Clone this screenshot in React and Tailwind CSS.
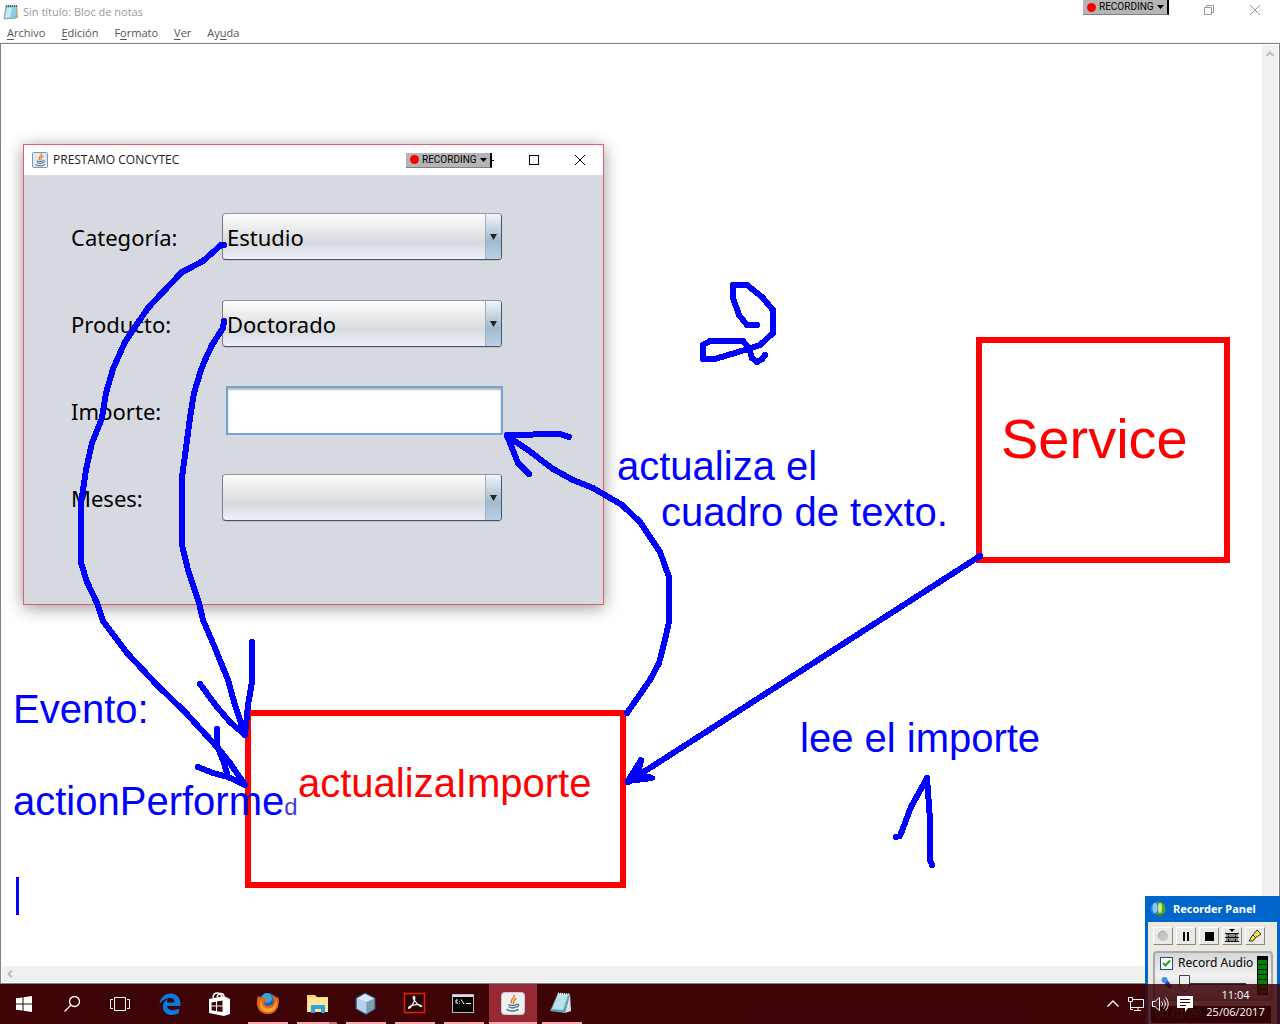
import React from "react";

const sans = "font-['Open_Sans',sans-serif]";

function NotepadIcon({ className }) {
  return (
    <svg className={className} viewBox="0 0 16 16" aria-hidden="true">
      <path d="M3 2 L14 2 L13 14 L1 15 Z" fill="#8fd0e0" stroke="#6f9aa5" strokeWidth="0.8" />
      <path d="M4 4 L9 4 L7 13 L2 14 Z" fill="#c4eaf3" />
      <path d="M14 2 L15.3 14.5 L13 14 Z" fill="#c8a96a" />
      <path d="M3 2 H14" stroke="#4b5d63" strokeWidth="2" strokeDasharray="1 1" />
    </svg>
  );
}

function JavaCup() {
  return (
    <g fill="none" strokeLinecap="round">
      <path d="M9.4 1.8 C10.5 4 5.6 4.8 7.4 7.6 M10.8 4.4 C8.4 5.4 9.8 6.6 8.8 8" stroke="#ee7a1c" strokeWidth="1.2" />
      <path d="M5 9 C6.5 9.8 9.5 9.8 11 9 M5.4 10.8 C7 11.6 9.3 11.6 10.6 10.8 M3.8 12.8 C6 14.2 10.5 14.2 12.4 12.8 M11.4 8.6 C13.6 8.4 13 10.6 11.2 10.8" stroke="#47708f" strokeWidth="1" />
    </g>
  );
}

function RecordingBadge() {
  return (
    <div className="flex h-[15px] w-[86px] items-center gap-[3px] border-r-2 border-b border-r-black border-b-[#808080] bg-[#b5b5b5] pl-1 font-[Roboto,sans-serif] text-[10px] leading-none text-black">
      <span className="size-[9px] shrink-0 rounded-full bg-[#fb0000]" />
      <span className="w-[55px]">RECORDING</span>
      <svg className="h-1 w-[7px] shrink-0" viewBox="0 0 7 4" aria-hidden="true"><path d="M0 0 H7 L3.5 4 Z" /></svg>
    </div>
  );
}

const menus = [["", "A", "rchivo"], ["", "E", "dición"], ["F", "o", "rmato"], ["", "V", "er"], ["Ay", "u", "da"]];

function Notepad() {
  return (
    <>
      <header className={`flex h-6 items-center justify-between bg-white ${sans}`}>
        <div className="flex items-center gap-1 pl-[3px] text-[11px] text-[#999]">
          <NotepadIcon className="size-4" />
          <h1>Sin título: Bloc de notas</h1>
        </div>
        <div className="flex h-full items-start">
          <RecordingBadge />
          <div className="flex pr-[18px] pl-[33px] pt-[3px]">
            <button aria-label="Restaurar" className="mr-8">
              <svg className="size-[14px]" viewBox="0 0 14 14" fill="none" stroke="#999"><path d="M2.5 4.5 H9.5 V11.5 H2.5 Z M4.5 4 V2.5 H11.5 V9.5 H10" /></svg>
            </button>
            <button aria-label="Cerrar">
              <svg className="size-[14px]" viewBox="0 0 14 14" fill="none" stroke="#999"><path d="M2 2 L12 12 M12 2 L2 12" /></svg>
            </button>
          </div>
        </div>
      </header>
      <nav className={`flex h-[19px] items-center gap-4 border-b border-[#f0f0f0] bg-white pl-[7px] text-[11px] text-[#555] ${sans}`}>
        {menus.map(([a, u, b]) => (
          <button key={b}>{a}<span className="underline underline-offset-2">{u}</span>{b}</button>
        ))}
      </nav>
      <section className="flex flex-1 flex-col border border-[#828282] bg-white p-px">
        <div className="flex flex-1">
          <div className="flex-1" />
          <div className="flex w-4 justify-center bg-[#f0f0f0] pt-[5px]">
            <svg className="h-2 w-2" viewBox="0 0 8 8" fill="none" stroke="#bdbdbd" strokeWidth="2"><path d="M0.5 6 L4 2.5 L7.5 6" /></svg>
          </div>
        </div>
        <div className="flex h-4 items-center bg-[#f0f0f0] pl-1">
          <svg className="size-2" viewBox="0 0 8 8" fill="none" stroke="#bdbdbd" strokeWidth="2"><path d="M6 0.5 L2.5 4 L6 7.5" /></svg>
        </div>
      </section>
    </>
  );
}

function Combo({ id, value }) {
  return (
    <div className="relative h-[47px] w-[280px] overflow-hidden rounded border border-t-[#9296a0] border-r-[#3d566d] border-b-[#4e525b] border-l-[#777b85] bg-linear-to-b from-[#fcfcfd] via-[#d7dadd] via-65% to-[#edf1fb] shadow-[0_1px_0_#bfc3cb]">
      <select id={id} defaultValue={value} className="h-full w-full appearance-none bg-transparent pt-[2px] pl-1 outline-none">
        <option>{value}</option>
      </select>
      <span className="pointer-events-none absolute inset-y-0 right-0 flex w-4 items-center justify-center border-l border-[#9db1c2] bg-linear-to-b from-[#f1f5f8] via-[#a4b9cb] via-60% to-[#bad0e8]">
        <svg className="h-[6px] w-[7px]" viewBox="0 0 7 6"><path d="M0 0 H7 L3.5 6 Z" fill="#1c2329" /></svg>
      </span>
    </div>
  );
}

const fields = [
  { id: "categoria", label: "Categoría:", value: "Estudio" },
  { id: "producto", label: "Producto:", value: "Doctorado" },
  { id: "importe", label: "Importe:", text: true },
  { id: "meses", label: "Meses:", value: "" },
];

function LoanWindow() {
  return (
    <section className="absolute top-[144px] left-[23px] w-[581px] border border-[#e85a68] bg-[#d6d9e0] shadow-[0_3px_16px_rgba(0,0,0,0.4)]">
      <header className={`flex h-[30px] items-center bg-white pl-2 text-[12px] text-[#222] ${sans}`}>
        <svg className="mr-[5px] size-4" viewBox="0 0 16 16" aria-hidden="true">
          <rect x="0.5" y="0.5" width="15" height="15" rx="1" fill="#dfe8ef" stroke="#7c98ac" />
          <JavaCup />
        </svg>
        <h2 className="flex-1">PRESTAMO CONCYTEC</h2>
        <RecordingBadge />
        <button aria-label="Minimizar" className="mr-[34px] h-px w-[2px] bg-black" />
        <button aria-label="Maximizar" className="mr-[34px]">
          <svg className="size-3" viewBox="0 0 12 12" fill="none" stroke="#000"><rect x="1.5" y="1.5" width="9" height="9" /></svg>
        </button>
        <button aria-label="Cerrar" className="mr-[17px]">
          <svg className="size-3" viewBox="0 0 12 12" fill="none" stroke="#000"><path d="M1 1 L11 11 M11 1 L1 11" /></svg>
        </button>
      </header>
      <form className="flex flex-col gap-10 pt-[38px] pb-[83px] pl-[47px] font-['Noto_Sans',sans-serif] text-[22px] text-black">
        {fields.map((f) => (
          <div key={f.id} className="flex h-[47px] items-center">
            <label htmlFor={f.id} className="w-[151px] pt-[2px]">{f.label}</label>
            {f.text ? (
              <input id={f.id} className="ml-1 h-[49px] w-[277px] border-2 border-[#76a3cf] bg-white px-1 shadow-[inset_0_2px_2px_#b8b8b8] outline-none" />
            ) : (
              <Combo id={f.id} value={f.value} />
            )}
          </div>
        ))}
      </form>
    </section>
  );
}

const strokes = [
  "224,245 221,245 203,261 190,268 182,272 162,293 148,308 135,327 125,342 113,369 106,393 102,418 92,443 86,470 81,503 81,563 87,582 97,603 103,621 127,653 143,670 157,685 185,712 217,747 230,763 245,785",
  "217,729 217,745 224,763 228,777 245,785",
  "198,767 213,773 228,777 245,785",
  "224,321 223,328 212,345 205,360 201,370 194,393 190,418 183,470 182,477 182,545 188,570 199,603 203,620 215,648 228,680 235,705 245,735",
  "252,642 252,682 248,705 245,735",
  "200,684 217,707 230,722 245,735",
  "569,437 560,434 507,435 512,448 518,463 529,474",
  "507,436 528,450 553,469 573,480 593,488 622,505 640,522 650,537 660,552 669,577 669,622 665,640 659,663 650,680 627,713",
  "980,556 628,782",
  "896,837 900,836 911,807 927,778 930,820 930,860 932,865",
  "757,325 747,325 739,315 733,298 733,285 747,285 762,297 773,310 773,333 760,345 748,349 715,359 703,359 703,345 710,341 743,341 749,348 752,358 757,362 762,359 765,355",
];

function Note({ className, children }) {
  return <p className={`absolute text-[40px] leading-none whitespace-nowrap ${className}`}>{children}</p>;
}

function Annotations() {
  return (
    <div className="pointer-events-none absolute inset-0 font-['Liberation_Sans',sans-serif] text-[#0000ff]">
      <div className="absolute top-[337px] left-[976px] h-[226px] w-[254px] border-[6px] border-[#ff0000]" />
      <div className="absolute top-[710px] left-[245px] h-[178px] w-[381px] border-[6px] border-[#ff0000]" />
      <svg className="absolute top-0 left-0 h-[1024px] w-[1280px]" viewBox="0 0 1280 1024" fill="none" stroke="#0000ff" strokeWidth="6" strokeLinecap="round" strokeLinejoin="round" shapeRendering="crispEdges">
        {strokes.map((points) => <polyline key={points} points={points} />)}
        <path d="M641 760 L628 781 L652 778 L638 774 Z" fill="#0000ff" />
      </svg>
      <p className="absolute top-[411px] left-[1001px] text-[56px] leading-none text-[#ff0000]">Service</p>
      <Note className="top-[763px] left-[298px] text-[#ff0000]">actualizaImporte</Note>
      <Note className="top-[446px] left-[617px]">actualiza el</Note>
      <Note className="top-[492px] left-[661px]">cuadro de texto.</Note>
      <Note className="top-[718px] left-[800px]">lee el importe</Note>
      <Note className="top-[689px] left-[13px]">Evento:</Note>
      <Note className="top-[781px] left-[13px]">actionPerforme<span className="text-[24px] text-[#4040c8]">d</span></Note>
      <div className="absolute top-[877px] left-[16px] h-[38px] w-[3px] bg-[#0000ff]" />
    </div>
  );
}

function PanelButton({ label, children }) {
  return (
    <button aria-label={label} className="flex h-[18px] w-5 items-center justify-center border border-t-white border-r-[#888] border-b-[#888] border-l-white bg-[#e9e9e5]">
      <svg className="size-[14px]" viewBox="0 0 14 14">{children}</svg>
    </button>
  );
}

function RecorderPanel() {
  return (
    <aside className="absolute right-0 bottom-0 h-32 w-[135px] border-x-[3px] border-[#0066cc] bg-[#ece9e1]">
      <header className="flex h-[26px] items-center gap-[7px] bg-[#0066cc] pl-[2px] font-['Noto_Sans',sans-serif] text-[11px] font-bold whitespace-nowrap text-white">
        <svg className="size-4 shrink-0" viewBox="0 0 16 16" aria-hidden="true">
          <circle cx="8" cy="8" r="7.5" fill="#2a7fd0" />
          <path d="M8 0.5 A7.5 7.5 0 0 1 8 15.5 Z" fill="#4fa524" />
          <ellipse cx="5" cy="7" rx="2.5" ry="5" fill="#88c6f4" />
          <ellipse cx="10" cy="7" rx="2" ry="5" fill="#c9ec7c" />
          <path d="M2 12 C5 14.5 11 14.5 14 12 A7.5 7.5 0 0 1 2 12 Z" fill="#1b5a55" />
        </svg>
        <h2>Recorder Panel</h2>
      </header>
      <div className="flex gap-[3px] pt-[5px] pl-[5px]">
        <PanelButton label="Grabar"><circle cx="7" cy="7" r="5" fill="#c4c4c4" /><path d="M2.5 9 A5 5 0 0 1 9 2.5" fill="none" stroke="#aaa" /></PanelButton>
        <PanelButton label="Pausa"><path d="M4 3 H6 V12 H4 Z M8 3 H10 V12 H8 Z" /></PanelButton>
        <PanelButton label="Detener"><path d="M3 3 H12 V12 H3 Z" /></PanelButton>
        <PanelButton label="Fotograma">
          <path d="M4 0 H10 L7 3 Z" />
          <path d="M1 5 H13 V12 H1 Z" fill="#888" />
          <path d="M0 4.5 H14 M0 8.5 H14 M0 12.5 H14" stroke="#111" />
          <path d="M3.5 4 V13 M10.5 4 V13" stroke="#111" strokeDasharray="2 1" />
        </PanelButton>
        <PanelButton label="Resaltar"><path d="M9 1 L13 5 L7 9 L5 12 L1 12 L4 7 Z" fill="#ffe23d" stroke="#333" /><path d="M5 6 L8 9" stroke="#333" /></PanelButton>
      </div>
      <div className="mt-[6px] ml-[5px] flex h-[50px] w-[120px] justify-between rounded-sm border-2 border-[#aaa] bg-linear-to-b from-[#d7d7d7] via-[#f2f2f2] to-[#c8c8c8] pt-[3px] pr-[3px] pl-[5px]">
        <div className="w-[90px]">
          <label className="flex h-[14px] items-center gap-[5px] font-['Noto_Sans',sans-serif] text-[12px] leading-none whitespace-nowrap text-black">
            <span className="relative size-[13px]">
              <input type="checkbox" defaultChecked className="block size-[13px] appearance-none border border-[#1c5180] bg-white" />
              <svg className="pointer-events-none absolute inset-0 size-[13px]" viewBox="0 0 13 13" fill="none" stroke="#21a121" strokeWidth="2"><path d="M3 6 L5.5 8.5 L10 3.5" /></svg>
            </span>
            Record Audio
          </label>
          <svg className="mt-[5px] h-[20px] w-[88px]" viewBox="0 0 88 20" aria-hidden="true">
            <path d="M4 4 L11 13" stroke="#164ca0" strokeWidth="4" /><circle cx="4.5" cy="5" r="3" fill="#458de8" />
            <path d="M20 9 H86" stroke="#333" strokeWidth="2" />
            <path d="M19.5 0.5 H29.5 V12 L24.5 17 L19.5 12 Z" fill="#eee" stroke="#444" />
          </svg>
        </div>
        <div className="h-[39px] w-[11px] shrink-0 bg-black p-px pt-1">
          <div className="h-full bg-[repeating-linear-gradient(#008300_0_4px,#000_4px_5px)]" />
        </div>
      </div>
      <div className="mt-[5px] ml-[3px] h-[17px] w-[120px] bg-black pl-1 font-['Liberation_Sans',sans-serif] text-[12px] leading-[17px] text-[#00a000]">00:01:20</div>
    </aside>
  );
}

const pinned = [
  { name: "Edge", icon: <path d="M1.5 12.5 C2.5 5.5 6.5 1.5 12.5 1.5 C19 1.5 23 6 22.5 14 H9 C9.5 18.5 16.5 19.5 21 16.5 V21 C13 25.5 4.5 22 4.8 14 C5.2 10.5 7.5 8 10 7 C9.2 8.5 9 9.3 9 10.4 H16.5 C16.5 7.5 15 6 12 6 C8 6 4 8.3 1.5 12.5 Z" fill="#0a7ade" /> },
  { name: "Tienda", icon: <><path d="M6 6 C6 0 13 -1 15 5 M10 5 C11 1 16 0 17 4" fill="none" stroke="#fff" strokeWidth="1.5" /><path d="M2 7 L17 4 V24 L2 21 Z M17 4 L23 7 V22 L17 24 Z" fill="#fff" /><path d="M4.5 10.5 L9 9.7 V13.5 H4.5 Z M10 9.5 L15.5 8.5 V13.5 H10 Z M4.5 14.5 H9 V19 L4.5 18.3 Z M10 14.5 H15.5 V20 L10 19.2 Z" fill="#3f0508" /></> },
  { name: "Firefox", open: true, icon: <><circle cx="12" cy="11" r="10" fill="#1668b3" /><circle cx="11" cy="6" r="5" fill="#3aa5d9" /><path d="M2 4 L6 6 C9 5 11 7 11 9 L8 10 C8 15 14 15 17 12 C19 9 17 6 15 4 C20 4 22 7 22.5 5 C24 13 21 22 12 22 C2 22 -1 13 2 4 Z" fill="#e8641b" /><path d="M6 7 C4 13 9 18 15 16 C19 15 20 11 20 8 C23 14 18 20 12 20 C4 20 2 12 6 7 Z" fill="#f7a928" /></> },
  { name: "Explorador", open: true, stacked: true, icon: <><path d="M2 3 H10 L12 5 H23 V20 H2 Z" fill="#f9d66c" /><path d="M3 6 H23 V20 H3 Z" fill="#ffe69a" /><path d="M6 13 H20 V21 H16 V17 H10 V21 H6 Z" fill="#2ba4e6" /></> },
  { name: "NetBeans", open: true, icon: <><path d="M11 1 L21 6 V17 L12 22.5 L2 17 V6 Z" fill="#94b8dd" stroke="#2c4770" strokeWidth="1.2" /><path d="M11 2 L20 6.5 L12 10 L3 6.5 Z" fill="#d8eaf8" /><path d="M3 7 L12 10.5 V21 L3 16.5 Z" fill="#b9d3ed" /><path d="M12.5 10.5 L20 7 V16.5 L12.5 21 Z" fill="#7f9fae" /></> },
  { name: "Acrobat", open: true, icon: <><rect x="1.5" y="1.5" width="20" height="19" fill="#250707" stroke="#e31c0c" strokeWidth="1.6" /><path d="M10.5 4.5 C9 5 11.5 10 17.5 14.5 C20 15.5 18 12 13 12.7 C9 13.3 6 14.5 5.5 16 C6 17.5 9 14 10.8 10 C12.4 6 12 4.2 10.5 4.5 Z" fill="none" stroke="#fff" strokeWidth="1.2" /></> },
  { name: "Símbolo del sistema", open: true, icon: <><rect x="0.5" y="2.5" width="21" height="18" fill="#050505" stroke="#bbb" /><path d="M1 3 H21 V5 H1 Z" fill="#ddd" /><path d="M6 8 H4 V11 H6 M7.5 9 V9.8 M7.5 11 V11.8 M9 7.5 L12 12 M14 11.5 H19" stroke="#fff" fill="none" /></> },
  { name: "Java", open: true, active: true, icon: <><rect x="0.5" y="0.5" width="23" height="22" rx="3" fill="#eef1f3" stroke="#c9cdd0" /><g transform="translate(1 1) scale(1.3)"><JavaCup /></g></> },
  { name: "Bloc de notas", open: true, icon: <><path d="M8 1 L20 2 L15 21 L0 19 Z" fill="#63a6b5" /><path d="M8 2 L18 3 L13 18 L2 17 Z" fill="#b8e3eb" /><path d="M20 2 L21 19 L15 21 Z" fill="#d9e5e7" /><path d="M8 1.5 L20 2.5" stroke="#e9f3f4" strokeWidth="2" strokeDasharray="1 1" /></> },
];

function Underline({ app }) {
  if (!app.open) return null;
  if (app.stacked) {
    return <span className="flex h-[2px] w-10"><span className="w-8 bg-[#ffa8b2]" /><span className="flex-1 bg-[#b57880]" /></span>;
  }
  return <span className={`h-[2px] bg-[#ffa8b2] ${app.active ? "w-12" : "w-10"}`} />;
}

function Taskbar() {
  return (
    <footer className="relative flex h-10 items-stretch justify-between bg-[#3c0207]/85">
      <div className="flex">
        <button aria-label="Inicio" className="flex w-12 items-center justify-center">
          <svg className="size-4" viewBox="0 0 16 16" fill="#fff"><path d="M0 2.3 L6.5 1.4 V7.5 H0 Z M7.5 1.2 L16 0 V7.5 H7.5 Z M0 8.5 H6.5 V14.6 L0 13.7 Z M7.5 8.5 H16 V16 L7.5 14.8 Z" /></svg>
        </button>
        <button aria-label="Buscar" className="flex w-12 items-center justify-center">
          <svg className="size-4" viewBox="0 0 16 16" fill="none" stroke="#fff" strokeWidth="1.3"><circle cx="10.5" cy="5.5" r="5" /><path d="M7 9 L0.5 15.5" /></svg>
        </button>
        <button aria-label="Vista de tareas" className="mr-[2px] flex w-12 items-center justify-center">
          <svg className="h-4 w-5" viewBox="0 0 20 16" fill="none" stroke="#fff"><path d="M4.5 1.5 H15.5 V14.5 H4.5 Z M3 3.5 H0.5 V12.5 H3 M17 3.5 H19.5 V12.5 H17" /></svg>
        </button>
        <div className="flex gap-px">
          {pinned.map((app) => (
            <button key={app.name} aria-label={app.name} className={`flex w-12 flex-col items-center justify-between pt-2 ${app.active ? "bg-[#962933]" : ""}`}>
              <svg className="h-6 w-6" viewBox="0 0 24 24">{app.icon}</svg>
              <Underline app={app} />
            </button>
          ))}
        </div>
      </div>
      <div className={`flex items-center text-white ${sans}`}>
        <div className="flex items-center gap-2 pr-[13px]">
          <svg className="h-4 w-3" viewBox="0 0 12 16" fill="none" stroke="#fff" strokeWidth="1.3"><path d="M0.5 10.5 L6 5 L11.5 10.5" /></svg>
          <svg className="h-4 w-[17px]" viewBox="0 0 17 16" fill="none" stroke="#fff"><path d="M5 3.5 H16.5 V11.5 H3 M1.5 1.5 H5.5 V5.5 H1.5 Z M3.5 6 V13.5 H6 M11 12 V14 M7 14.5 H14" /></svg>
          <svg className="h-4 w-[17px]" viewBox="0 0 17 16" fill="none" stroke="#fff"><path d="M0.5 5.5 H3 L7.5 1.5 V14.5 L3 10.5 H0.5 Z M9.5 5.5 C11 7 11 9 9.5 10.5 M11.5 3.5 C14 6 14 10 11.5 12.5 M13.5 1.5 C17 5 17 11 13.5 14.5" /></svg>
          <svg className="h-4 w-4" viewBox="0 0 16 16"><path d="M0 0 H16 V12 H11 L8 16 V12 H0 Z" fill="#fff" /><path d="M3 3.5 H13 M3 6.5 H13 M3 9.5 H9" stroke="#3f0508" /></svg>
        </div>
        <div className="w-[59px] pb-[2px] text-center text-[11px] leading-[17px]">
          <div>11:04</div>
          <div>25/06/2017</div>
        </div>
        <div className="w-[15px]" />
      </div>
    </footer>
  );
}

export default function App() {
  return (
    <main className="relative flex min-h-screen flex-col overflow-hidden bg-[#420a0c]">
      <Notepad />
      <LoanWindow />
      <Annotations />
      <RecorderPanel />
      <Taskbar />
    </main>
  );
}
